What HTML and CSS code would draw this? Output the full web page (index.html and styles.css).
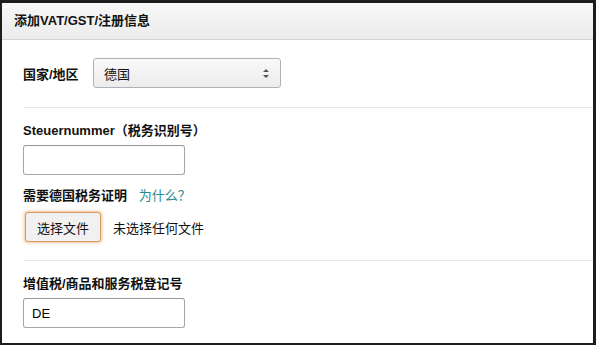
FILE: index.html
```html
<!DOCTYPE html>
<html lang="zh-CN">
<head>
    <meta charset="UTF-8">
    <title>添加VAT/GST/注册信息</title>
    <link rel="stylesheet" href="styles.css">
</head>
<body>
<div class="panel">
    <div class="panel-head">添加VAT/GST/注册信息</div>

    <div class="panel-body">
        <div class="row country">
            <label class="lbl">国家/地区</label>
            <div class="select">
                <span>德国</span>
                <svg width="6" height="9" viewBox="0 0 6 9"><path d="M3 0L6 3H0z M3 9L0 6H6z" fill="#555"/></svg>
            </div>
        </div>

        <hr class="sep">

        <div class="field">
            <label class="lbl">Steuernummer（税务识别号）</label>
            <input type="text" class="txt">
        </div>

        <div class="field proof">
            <label class="lbl">需要德国税务证明</label> <a href="#" class="why">为什么？</a>
            <div class="file-row">
                <button class="file-btn">选择文件</button>
                <span class="file-none">未选择任何文件</span>
            </div>
        </div>

        <hr class="sep">

        <div class="field">
            <label class="lbl">增值税/商品和服务税登记号</label>
            <input type="text" class="txt" value="DE">
        </div>
    </div>
</div>
</body>
</html>
```

FILE: styles.css
```css
html, body { margin: 0; height: 100%; }
body { background: #1e1c1c; font-family: "Liberation Sans", "Noto Sans CJK SC", sans-serif; font-size: 13px; color: #111; padding: 3px 3px 2px 2px; box-sizing: border-box; }
.panel { background: #fff; height: 100%; overflow: hidden; }
.panel-head { height: 36px; line-height: 36px; padding-left: 12px; font-weight: bold; background: linear-gradient(#f7f7f7, #ececec); border-bottom: 1px solid #d6d6d6; }
.panel-body { padding: 18px 0 0 21px; }
.lbl { font-weight: bold; }
.row { display: flex; align-items: center; }
.country .lbl { width: 70px; }
.select { box-sizing: border-box; height: 30px; width: 188px; border: 1px solid #adb1b8; border-radius: 3px; background: linear-gradient(#f9f9f9, #ececec); display: flex; align-items: center; justify-content: space-between; padding: 0 11px 0 10px; }
.sep { border: 0; border-top: 1px solid #e7e7e7; margin: 19px 0 0 0; }
.field { margin-top: 14px; }
.field .lbl { display: inline-block; line-height: 18px; }
.txt { display: block; width: 162px; height: 30px; box-sizing: border-box; border: 1px solid #a6a6a6; border-top-color: #949494; border-radius: 3px; margin: 5px 0 0; padding: 0 8px; font: 13px "Liberation Sans", "Noto Sans CJK SC", sans-serif; }
.proof { margin-top: 10px; }
.why { color: #2a8a93; text-decoration: none; margin-left: 8px; }
.file-row { display: flex; align-items: center; margin-top: 7px; padding-left: 2px; }
.file-btn { width: 76px; height: 30px; border: 1px solid #d89b5f; border-radius: 3px; background: #f1f1f1; box-shadow: 0 0 3px 1px rgba(228,121,17,.45); font: 13px "Liberation Sans", "Noto Sans CJK SC", sans-serif; color: #111; padding: 0; }
.file-none { margin-left: 12px; }
.field + .sep { margin-top: 18px; }
```
